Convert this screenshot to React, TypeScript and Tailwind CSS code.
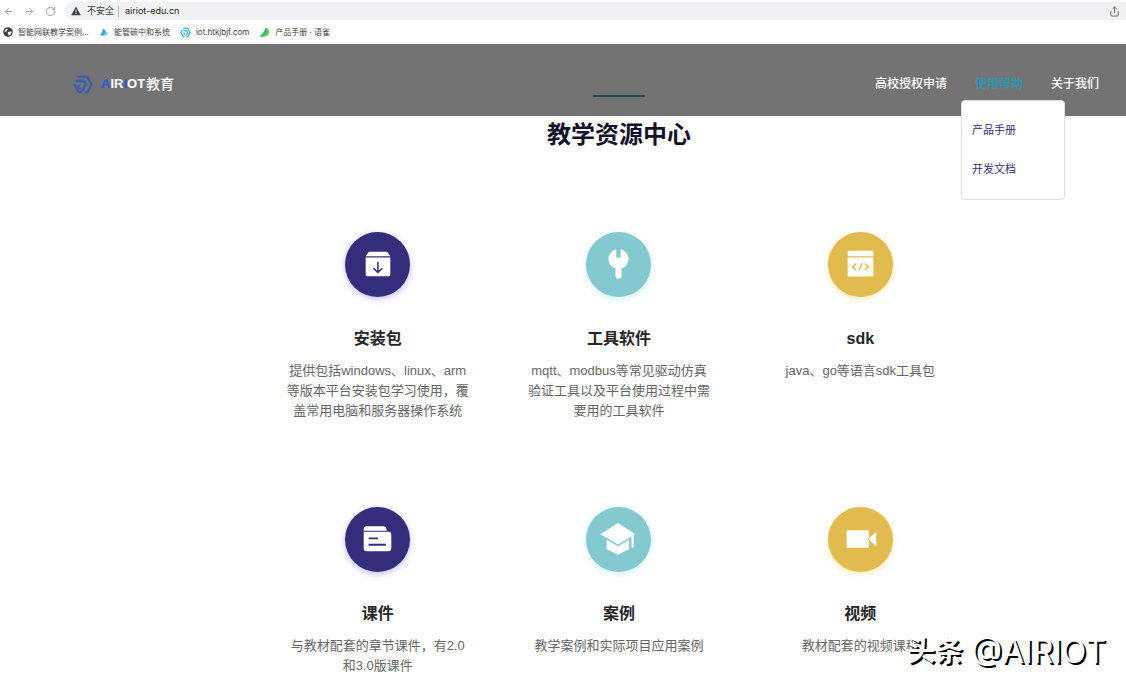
import type { ReactNode } from "react";
import { ArrowLeft, ArrowRight, RotateCw, Share } from "lucide-react";
import clsx from "clsx";

type Tone = "indigo" | "teal" | "amber";

interface Resource {
  title: string;
  description: string;
  tone: Tone;
  icon: ReactNode;
}

const TONE_CLASSES: Record<Tone, string> = {
  indigo: "bg-[#342d7c] shadow-[0_2px_6px_rgba(80,70,220,0.35)]",
  teal: "bg-[#84c9cf] shadow-[0_2px_6px_rgba(132,220,228,0.4)]",
  amber: "bg-[#e2bb4e] shadow-[0_2px_6px_rgba(255,205,70,0.4)]",
};

const PackageIcon = (
  <>
    <path d="M25.5 20h16c1 0 1.700.400 2.200 1.200L46 24.700H21l2.300-3.500c.500-.800 1.200-1.200 2.200-1.200Z" fill="#fff" />
    <path d="M21 25.800h25V43.500a1.500 1.500 0 0 1-1.500 1.500h-22a1.500 1.500 0 0 1-1.500-1.500Z" fill="#fff" />
    <path d="M33.400 30.300v10.500M28.900 36.800l4.500 4.200 4.500-4.200" fill="none" stroke="#342d7c" strokeWidth="1.500" />
  </>
);

const WrenchIcon = (
  <path
    d="M30.700 17.600v7.700a.8.8 0 0 0 .8.800h2.800a.8.8 0 0 0 .8-.8v-7.700A10 10 0 0 1 36 37v7.500a3 3 0 0 1-6 0V37a10 10 0 0 1 .7-19.400Z"
    fill="#fff"
  />
);

const CodeIcon = (
  <>
    <path d="M21 19h24a1 1 0 0 1 1 1v4.700H20V20a1 1 0 0 1 1-1Z" fill="#fff" />
    <path d="M20 25.900h26v18.400a1 1 0 0 1-1 1H21a1 1 0 0 1-1-1Z" fill="#fff" />
    <path
      d="M28.700 32l-3.700 3.300 3.700 3.300M37.300 32l3.700 3.300-3.700 3.300M34.700 31.500l-3.200 7.600"
      fill="none"
      stroke="#e2bb4e"
      strokeWidth="1.400"
    />
  </>
);

const CoursewareIcon = (
  <>
    <path d="M22 19.500h17c2 0 3 1.500 3.500 4.500H19v-1.500a3 3 0 0 1 3-3Z" fill="#fff" />
    <path d="M19 25.200h25.500A2.500 2.500 0 0 1 47 27.700V42.500a2.500 2.500 0 0 1-2.500 2.500h-23a2.500 2.500 0 0 1-2.500-2.500Z" fill="#fff" />
    <path d="M24 31.800h9.500M24 38.300h17.500" stroke="#342d7c" strokeWidth="1.900" />
  </>
);

const GraduationIcon = (
  <>
    <path d="M32.400 16.300L50 27.700 32.400 38 14.700 27.700Z" fill="#fff" />
    <path d="M21 33.200l11.400 6.700 11.400-6.700V43L32.400 48.400 21 43Z" fill="#fff" />
    <path d="M46.200 29.500l2.300-1.300v13.200h-2.300Z" fill="#fff" />
  </>
);

const VideoIcon = (
  <>
    <rect x="19" y="23.500" width="22.500" height="18" rx="1" fill="#fff" />
    <path d="M40.500 32.500l9-8.800v17.600Z" fill="#fff" stroke="#e2bb4e" strokeWidth="1" />
  </>
);

const RESOURCES: Resource[] = [
  {
    title: "安装包",
    description: "提供包括windows、linux、arm等版本平台安装包学习使用，覆盖常用电脑和服务器操作系统",
    tone: "indigo",
    icon: PackageIcon,
  },
  {
    title: "工具软件",
    description: "mqtt、modbus等常见驱动仿真验证工具以及平台使用过程中需要用的工具软件",
    tone: "teal",
    icon: WrenchIcon,
  },
  { title: "sdk", description: "java、go等语言sdk工具包", tone: "amber", icon: CodeIcon },
  {
    title: "课件",
    description: "与教材配套的章节课件，有2.0和3.0版课件",
    tone: "indigo",
    icon: CoursewareIcon,
  },
  { title: "案例", description: "教学案例和实际项目应用案例", tone: "teal", icon: GraduationIcon },
  { title: "视频", description: "教材配套的视频课程", tone: "amber", icon: VideoIcon },
];

const BOOKMARKS: { label: string; icon: ReactNode }[] = [
  {
    label: "智能网联教学案例...",
    icon: (
      <svg viewBox="0 0 10 10" className="size-[10px]">
        <circle cx="5" cy="5" r="4.800" fill="#3c4043" />
        <path d="M1.300 4.600C1.800 3 3 2 4.600 1.700c.5.700-.2 1.300-.8 1.700.3.800-.5 1-1.100 1.100-.4.300-.9.300-1.400.1ZM5 5.200c1-.8 2.300-1 3.600-.6.100 1.900-1 3.400-2.700 4-.7-.5-.3-1.200-.6-1.800-.6-.4-.7-1.100-.3-1.600Z" fill="#fff" />
      </svg>
    ),
  },
  {
    label: "能管碳中和系统",
    icon: (
      <svg viewBox="0 0 10 10" className="size-[10px]">
        <path d="M3.800 1.500c2 .8 3 2.200 3.200 4L4.300 8.800 1 8.200C2.500 6.500 3.600 4.500 3.800 1.500Z" fill="#3aa5e0" />
        <path d="M4.300 8.800C5 6 7 5 9.300 5.500 8.800 7.800 7 9 4.300 8.800Z" fill="#7cc7ee" />
      </svg>
    ),
  },
  {
    label: "iot.htkjbjf.com",
    icon: (
      <svg viewBox="0 0 12 12" className="size-[11px]" fill="none" stroke="#35b3d6" strokeWidth="1.400">
        <path d="M3.500 1.500h5L11 6 8.500 10.500H7" />
        <path d="M2.500 3.500L1 6l2.500 4.500H5M3.500 4h3.700l1.200 2-2 3.500M3.800 6l1.500 2.500" />
      </svg>
    ),
  },
  {
    label: "产品手册 · 语雀",
    icon: (
      <svg viewBox="0 0 11 11" className="size-[11px]">
        <path d="M6.300 1c2.600-.3 4.200 1.800 3.900 4.300C9.800 8.400 7 10 3.700 9.900L.5 9.700C2.900 7.500 5.500 5 6.300 1Z" fill="#55d06c" />
        <path d="M6.300 1C6 5 3.500 7.500.5 9.700c3-.4 6.500-2 7-5.200.2-1.600-.2-2.800-1.200-3.500Z" fill="#35b851" />
      </svg>
    ),
  },
];

function BrowserBar() {
  return (
    <div className="bg-white font-['Inter','Noto_Sans_CJK_SC',sans-serif] text-[#3c4043]">
      <div className="flex h-5 items-end">
        <div className="flex h-[18px] w-[65px] shrink-0 items-center gap-[10px] pl-[3px] text-[#9a9c9f]">
          <button type="button" aria-label="后退">
            <ArrowLeft className="size-[11px]" />
          </button>
          <button type="button" aria-label="前进">
            <ArrowRight className="size-[11px]" />
          </button>
          <button type="button" aria-label="刷新">
            <RotateCw className="size-[11px]" />
          </button>
        </div>
        <div className="flex h-[18px] flex-1 items-center rounded-l-full bg-[#eff1f2] pr-[6px] pl-[6px] text-[9px]">
          <svg viewBox="0 0 10 10" className="mr-[6px] size-[10px]">
            <path d="M5 .6L9.800 9.300H.2Z" fill="#3c4043" />
            <path d="M5 3.600v2.700M5 7.100v1.100" stroke="#eff1f2" strokeWidth="1" />
          </svg>
          <span>不安全</span>
          <span className="mx-1 h-[11px] w-px bg-[#b5b8bb]" />
          <input
            aria-label="地址"
            defaultValue="airiot-edu.cn"
            className="min-w-0 flex-1 bg-transparent pl-[2px] text-[#202124] outline-none"
          />
          <button type="button" aria-label="分享">
            <Share className="size-[11px] text-[#5f6368]" />
          </button>
        </div>
      </div>
      <nav className="flex h-6 items-center gap-[10px] pl-[3px] text-[8px]">
        {BOOKMARKS.map((bookmark) => (
          <a key={bookmark.label} href="#" className="flex items-center gap-[5px] whitespace-nowrap">
            {bookmark.icon}
            {bookmark.label}
          </a>
        ))}
      </nav>
    </div>
  );
}

function Logo() {
  return (
    <a href="#" className="flex items-center text-white">
      <svg viewBox="0 0 22 20" className="mr-[7px] h-5 w-[22px]" fill="none" stroke="#3f5cb5" strokeWidth="2.300">
        <path d="M5.500 2.600h9.700L19.600 10.400l-4.300 7.800H12.500" />
        <path d="M3.400 7h8.600L13.900 10.400l-3.900 7" />
        <path d="M1.900 9.800L6.500 18.200h3.400M8.600 15.600L6.200 11" />
      </svg>
      <span className="text-[13px] font-bold">
        <span className="text-[#2a57dc]">A</span>IR<span className="text-[#2a57dc]">I</span>OT
      </span>
      <span className="ml-px text-[14px] font-medium">教育</span>
    </a>
  );
}

function SiteHeader() {
  return (
    <header className="absolute inset-x-0 top-0 z-10 flex h-[72px] items-center justify-between bg-black/55 pt-2 pr-[27px] pl-[72px]">
      <Logo />
      <nav className="flex gap-7 text-[12px] font-medium text-white">
        <a href="#">高校授权申请</a>
        <div className="relative">
          <a href="#" className="font-bold text-[#2f93ab]">
            使用帮助
          </a>
          <div className="absolute top-[25px] -left-[14px] flex w-[104px] flex-col gap-[23px] rounded-sm border border-[#dddddd] bg-white px-[10px] pt-[21px] pb-[22px] text-[11px] leading-4 font-normal text-[#372d78]">
            <a href="#">产品手册</a>
            <a href="#">开发文档</a>
          </div>
        </div>
        <a href="#">关于我们</a>
      </nav>
    </header>
  );
}

function ResourceCard({ title, description, tone, icon }: Resource) {
  return (
    <article className="flex flex-col items-center px-7 text-center">
      <div className={clsx("size-[65px] rounded-full", TONE_CLASSES[tone])}>
        <svg viewBox="0 0 66 66" className="size-full">
          {icon}
        </svg>
      </div>
      <h3 className="mt-[30px] text-[16px] leading-6 font-bold text-[#262626]">{title}</h3>
      <p className="mt-[10px] text-[13px] leading-5 text-[#666666]">{description}</p>
    </article>
  );
}

export default function App() {
  return (
    <div className="min-h-screen overflow-hidden bg-white font-['Liberation_Sans','Noto_Sans_CJK_SC',sans-serif]">
      <BrowserBar />
      <div className="relative">
        <SiteHeader />
        <main className="pt-[51px] pr-[145px] pl-[257px]">
          <div className="mx-auto h-[2px] w-[52px] bg-[#50a0c0]" />
          <h2 className="mt-5 text-center text-[24px] leading-9 font-bold text-[#15132b]">教学资源中心</h2>
          <div className="mt-[79px] grid grid-cols-3 gap-y-[86px]">
            {RESOURCES.map((resource) => (
              <ResourceCard key={resource.title} {...resource} />
            ))}
          </div>
        </main>
        <div className="absolute right-5 bottom-1 flex items-center gap-2 leading-10 text-white [text-shadow:2px_2px_0_#000]">
          <span className="text-[28px] font-bold">头条</span>
          <span className="font-['Inter',sans-serif] text-[32px]">@AIRIOT</span>
        </div>
      </div>
    </div>
  );
}
